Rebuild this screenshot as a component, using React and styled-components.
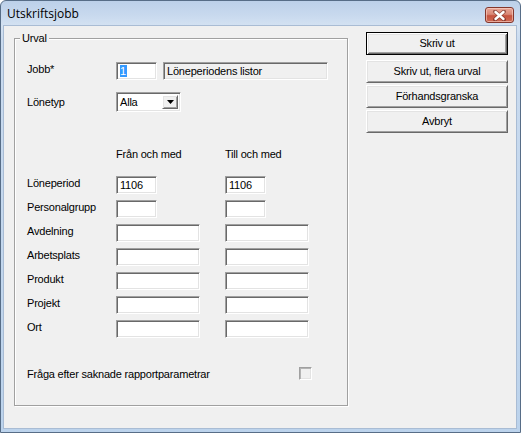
import React from "react";
import styled, { createGlobalStyle } from "styled-components";

const GlobalStyle = createGlobalStyle`
  html, body { margin: 0; padding: 0; background: #ffffff; }
  body { font-family: "Liberation Sans", Arial, sans-serif; font-size: 11px; letter-spacing: -0.2px; color: #000; }
  * { box-sizing: border-box; }
`;

const Window = styled.div`
  width: 521px;
  height: 433px;
  border: 1px solid #576d87;
  border-radius: 6px 6px 0 0;
  background: linear-gradient(#bcd0e9 0px, #c8d9ee 14px, #d4e2f2 25px, #cadbef 40px, #bcd3ec 100%);
  display: flex;
  flex-direction: column;
  overflow: hidden;
`;

const TitleBar = styled.div`
  height: 25px;
  display: flex;
  align-items: flex-start;
  padding-left: 6px;
  flex-shrink: 0;
`;

const Title = styled.span`
  font-family: "Open Sans", "Noto Sans", sans-serif;
  font-size: 12px;
  letter-spacing: 0;
  line-height: 16px;
  margin-top: 5px;
  color: #000;
`;

const CloseButton = styled.div`
  margin-left: auto;
  margin-right: 6px;
  margin-top: 6px;
  width: 29px;
  height: 16px;
  border: 1px solid #84372c;
  border-radius: 3px;
  background: linear-gradient(#e8a596 0%, #d98876 45%, #c5533f 55%, #cf6a55 100%);
  box-shadow: inset 0 0 0 1px rgba(255, 220, 210, 0.55);
  display: flex;
  align-items: center;
  justify-content: center;
`;

const Client = styled.div`
  margin: 0 4px 4px 3px;
  flex: 1;
  background: #f0f0f0;
  box-shadow: 0 0 0 1px #a9bcd4;
  display: flex;
  align-items: flex-start;
  padding-left: 10px;
`;

const GroupBox = styled.div`
  position: relative;
  margin-top: 12px;
  width: 334px;
  height: 368px;
  border: 1px solid #a0a0a0;
  box-shadow: inset 1px 1px 0 #ffffff, 1px 1px 0 #ffffff;
  padding: 23px 0 0 12px;
  display: flex;
  flex-direction: column;
`;

const Legend = styled.span`
  position: absolute;
  top: -7px;
  left: 5px;
  padding: 0 2px;
  background: #f0f0f0;
  line-height: 13px;
`;

const FieldRow = styled.div`
  display: flex;
  align-items: flex-start;
  margin-top: ${(p) => p.$top || 0}px;
`;

const Label = styled.span`
  display: block;
  width: ${(p) => p.$w || 89}px;
  line-height: 13px;
  padding-top: ${(p) => p.$pt ?? 1}px;
  white-space: nowrap;
`;

const sunken = `
  border: 1px solid;
  border-color: #a0a0a0 #ffffff #ffffff #a0a0a0;
  box-shadow: inset 1px 1px 0 #696969, inset -1px -1px 0 #e3e3e3;
`;

const TextBox = styled.div`
  ${sunken}
  width: ${(p) => p.$w || 41}px;
  height: 18px;
  background: ${(p) => (p.$readOnly ? "#f0f0f0" : "#ffffff")};
  padding: 2px 0 0 3px;
  line-height: 13px;
  margin-left: ${(p) => p.$ml || 0}px;
  white-space: nowrap;
  overflow: hidden;
`;

const Selected = styled.span`
  background: #3399ff;
  color: #ffffff;
  padding: 0 1px 0 0;
`;

const Combo = styled.div`
  ${sunken}
  width: 65px;
  height: 20px;
  background: #ffffff;
  display: flex;
  align-items: stretch;
  padding: 2px;
`;

const ComboText = styled.span`
  flex: 1;
  line-height: 14px;
  padding-left: 1px;
`;

const raised = `
  border: 1px solid;
  border-color: #ffffff #696969 #696969 #ffffff;
  box-shadow: inset 1px 1px 0 #e3e3e3, inset -1px -1px 0 #a0a0a0;
`;

const ComboButton = styled.div`
  ${raised}
  width: 16px;
  background: #f0f0f0;
  display: flex;
  align-items: center;
  justify-content: center;
`;

const RangeGrid = styled.div`
  display: grid;
  grid-template-columns: 89px 109px 1fr;
  grid-auto-rows: 18px;
  row-gap: 6px;
  margin-top: 15px;
`;

const HeaderRow = styled.div`
  display: grid;
  grid-template-columns: 89px 109px 1fr;
  margin-top: 36px;
  line-height: 13px;
`;

const CheckRow = styled.div`
  display: flex;
  align-items: flex-start;
  width: 285px;
  margin-top: 29px;
`;

const CheckBox = styled.div`
  margin-left: auto;
  width: 13px;
  height: 13px;
  border: 1px solid;
  border-color: #a0a0a0 #ffffff #ffffff #a0a0a0;
  box-shadow: inset 1px 1px 0 #b4b4b4, inset -1px -1px 0 #e3e3e3;
  background: #f0f0f0;
`;

const ButtonColumn = styled.div`
  margin-left: 18px;
  margin-top: 6px;
  width: 142px;
  display: flex;
  flex-direction: column;
`;

const Button = styled.div`
  height: 23px;
  margin-top: ${(p) => p.$mt || 0}px;
  background: #f0f0f0;
  display: flex;
  align-items: center;
  justify-content: center;
  line-height: 13px;
  ${(p) =>
    p.$default
      ? `
    border: 1px solid #000000;
    box-shadow: inset 1px 1px 0 #ffffff, inset -1px -1px 0 #696969, inset 2px 2px 0 #e3e3e3, inset -2px -2px 0 #a0a0a0;
  `
      : raised}
`;

const rows = [
  { label: "Löneperiod", w: 41, v: "1106" },
  { label: "Personalgrupp", w: 41, v: "" },
  { label: "Avdelning", w: 84, v: "" },
  { label: "Arbetsplats", w: 84, v: "" },
  { label: "Produkt", w: 84, v: "" },
  { label: "Projekt", w: 84, v: "" },
  { label: "Ort", w: 84, v: "" },
];

export default function App() {
  return (
    <>
      <GlobalStyle />
      <Window>
        <TitleBar>
          <Title>Utskriftsjobb</Title>
          <CloseButton>
            <svg width="13" height="11" viewBox="0 0 13 11">
              <path d="M2 1.5 L11 9.5 M11 1.5 L2 9.5" stroke="#5a1d15" strokeWidth="4" strokeLinecap="round" opacity="0.55" />
              <path d="M2.5 2 L10.5 9 M10.5 2 L2.5 9" stroke="#ffffff" strokeWidth="2.4" strokeLinecap="round" />
            </svg>
          </CloseButton>
        </TitleBar>
        <Client>
          <GroupBox>
            <Legend>Urval</Legend>
            <FieldRow>
              <Label>Jobb*</Label>
              <TextBox $w={41}>
                <Selected>1</Selected>
              </TextBox>
              <TextBox $w={165} $ml={6} $readOnly>
                Löneperiodens listor
              </TextBox>
            </FieldRow>
            <FieldRow $top={12}>
              <Label $pt={4}>Lönetyp</Label>
              <Combo>
                <ComboText>Alla</ComboText>
                <ComboButton>
                  <svg width="7" height="4" viewBox="0 0 7 4">
                    <path d="M0 0 H7 L3.5 4 Z" fill="#000" />
                  </svg>
                </ComboButton>
              </Combo>
            </FieldRow>
            <HeaderRow>
              <span />
              <span>Från och med</span>
              <span>Till och med</span>
            </HeaderRow>
            <RangeGrid>
              {rows.map((r) => (
                <React.Fragment key={r.label}>
                  <Label $pt={1}>{r.label}</Label>
                  <TextBox $w={r.w}>{r.v}</TextBox>
                  <TextBox $w={r.w}>{r.v}</TextBox>
                </React.Fragment>
              ))}
            </RangeGrid>
            <CheckRow>
              <Label $w={200} $pt={1}>Fråga efter saknade rapportparametrar</Label>
              <CheckBox />
            </CheckRow>
          </GroupBox>
          <ButtonColumn>
            <Button $default>Skriv ut</Button>
            <Button $mt={5}>Skriv ut, flera urval</Button>
            <Button $mt={2}>Förhandsgranska</Button>
            <Button $mt={2}>Avbryt</Button>
          </ButtonColumn>
        </Client>
      </Window>
    </>
  );
}
